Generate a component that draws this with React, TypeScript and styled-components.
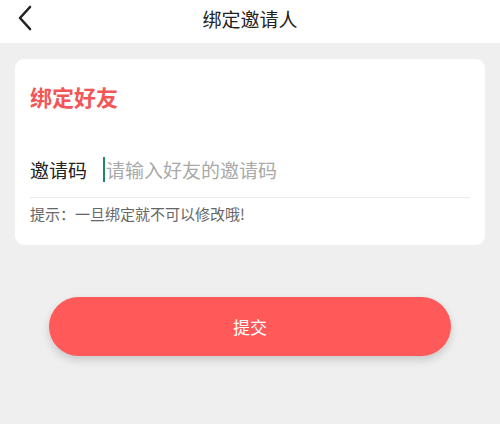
import styled, { createGlobalStyle } from 'styled-components'

const GlobalStyle = createGlobalStyle`
  html, body {
    margin: 0;
    padding: 0;
    background: #efefef;
    font-family: "Noto Sans CJK SC", "Noto Sans", sans-serif;
  }
`

const Page = styled.div`
  width: 500px;
  height: 424px;
  background: #efefef;
  display: flex;
  flex-direction: column;
`

const Header = styled.header`
  position: relative;
  height: 43px;
  background: #fff;
  display: flex;
  align-items: center;
  justify-content: center;
`

const BackButton = styled.button`
  position: absolute;
  left: 12px;
  top: 4px;
  width: 26px;
  height: 28px;
  padding: 0;
  border: none;
  background: none;
  display: flex;
  align-items: center;
  justify-content: center;
`

const Title = styled.h1`
  margin: 0;
  font-size: 19px;
  font-weight: 400;
  color: #222;
  line-height: 1;
  transform: translateY(-3px);
`

const Card = styled.section`
  margin: 16px 15px 0;
  background: #fff;
  border-radius: 9px;
  padding: 22px 15px 20px;
  height: 186px;
  box-sizing: border-box;
`

const CardTitle = styled.h2`
  margin: 0;
  font-size: 22px;
  font-weight: 700;
  color: #f25656;
  line-height: 30px;
`

const FieldRow = styled.div`
  display: flex;
  align-items: center;
  margin-top: 43px;
  height: 30px;
  padding-bottom: 13px;
  border-bottom: 1px solid #ececec;
`

const Label = styled.span`
  font-size: 19px;
  color: #222;
  margin-right: 16px;
`

const Cursor = styled.span`
  display: inline-block;
  width: 2px;
  height: 25px;
  background: #1b8a6b;
  margin-right: 1px;
`

const Placeholder = styled.span`
  font-size: 19px;
  color: #a9a9a9;
`

const Hint = styled.p`
  margin: 6px 0 0;
  font-size: 15px;
  color: #666;
  line-height: 20px;
`

const SubmitButton = styled.button`
  margin: 52px auto 0;
  width: 402px;
  height: 59px;
  border: none;
  border-radius: 30px;
  background: #ff5959;
  color: #fff;
  font-family: inherit;
  font-size: 17px;
  box-shadow: 0 4px 8px rgba(0, 0, 0, 0.16);
`

export default function App() {
  return (
    <>
      <GlobalStyle />
      <Page>
        <Header>
          <BackButton aria-label="back">
            <svg width="16" height="26" viewBox="0 0 16 26" fill="none">
              <path d="M13 2 L3 13 L13 24" stroke="#222" strokeWidth="2.6" strokeLinecap="round" strokeLinejoin="round" />
            </svg>
          </BackButton>
          <Title>绑定邀请人</Title>
        </Header>
        <Card>
          <CardTitle>绑定好友</CardTitle>
          <FieldRow>
            <Label>邀请码</Label>
            <Cursor />
            <Placeholder>请输入好友的邀请码</Placeholder>
          </FieldRow>
          <Hint>提示：一旦绑定就不可以修改哦!</Hint>
        </Card>
        <SubmitButton>提交</SubmitButton>
      </Page>
    </>
  )
}
